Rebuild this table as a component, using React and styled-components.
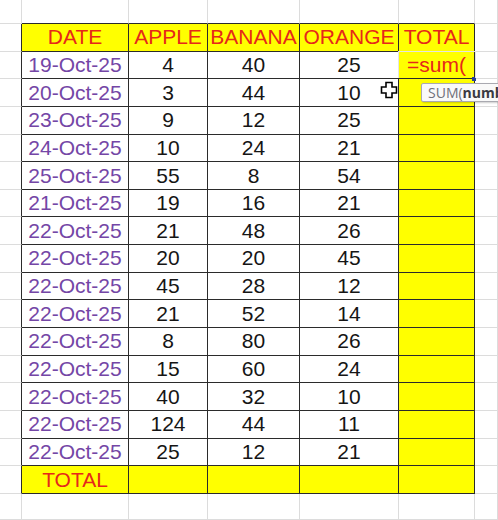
import React from 'react';
import styled, { createGlobalStyle } from 'styled-components';

const GRID = '#dcdcdc';
const DARK = '#2b2b2b';
const YELLOW = '#ffff00';

const GlobalStyle = createGlobalStyle`
  html, body {
    margin: 0;
    padding: 0;
    background: #ffffff;
    overflow: hidden;
  }
`;

const Sheet = styled.div`
  position: relative;
  display: grid;
  grid-template-columns: 22px 107px 79px 92px 99px 76px 1fr;
  grid-template-rows: 24px repeat(17, 27.65px) 1fr;
  width: 100%;
  height: 520px;
  overflow: hidden;
  font-family: 'Liberation Sans', Arial, sans-serif;
  font-size: 21px;
`;

const Cell = styled.div`
  box-sizing: border-box;
  display: flex;
  align-items: center;
  justify-content: center;
  border-right: 1px solid ${p => (p.$edgeR ? DARK : GRID)};
  border-bottom: 1px solid ${p => (p.$edgeB ? DARK : GRID)};
  background: ${p => (p.$fill ? YELLOW : '#ffffff')};
  white-space: nowrap;
`;

const BlankCell = styled(Cell)``;

const HeadCell = styled(Cell)`
  color: #e6281a;
`;

const DateCell = styled(Cell)`
  color: #7446a6;
`;

const NumCell = styled(Cell)`
  color: #151515;
`;

const EditCell = styled(Cell)`
  position: relative;
  justify-content: flex-start;
  padding-left: 8px;
  color: #e6281a;

  &::after {
    content: '';
    position: absolute;
    inset: -1px -2px 0 -1px;
    border: 1px solid #e4e4e4;
    border-bottom: none;
    pointer-events: none;
  }
`;

const FillHandle = styled.span`
  position: absolute;
  right: -2px;
  bottom: -3px;
  width: 4px;
  height: 4px;
  background: #26409a;
`;

const Tooltip = styled.div`
  position: absolute;
  left: 421px;
  top: 83px;
  height: 19px;
  padding: 0 6px;
  display: flex;
  align-items: center;
  box-sizing: border-box;
  background: #f9f9f9;
  border: 1px solid #a9a9b0;
  border-radius: 2px;
  box-shadow: 1px 1px 2px rgba(0, 0, 0, 0.2);
  font-family: 'Open Sans', 'Noto Sans', sans-serif;
  font-size: 14px;
  color: #70707a;
  white-space: nowrap;
`;

const Arg = styled.b`
  color: #3a3a42;
  font-weight: 700;
`;

const Cursor = styled.svg`
  position: absolute;
  left: 380px;
  top: 81px;
`;

const rows = [
  ['19-Oct-25', 4, 40, 25],
  ['20-Oct-25', 3, 44, 10],
  ['23-Oct-25', 9, 12, 25],
  ['24-Oct-25', 10, 24, 21],
  ['25-Oct-25', 55, 8, 54],
  ['21-Oct-25', 19, 16, 21],
  ['22-Oct-25', 21, 48, 26],
  ['22-Oct-25', 20, 20, 45],
  ['22-Oct-25', 45, 28, 12],
  ['22-Oct-25', 21, 52, 14],
  ['22-Oct-25', 8, 80, 26],
  ['22-Oct-25', 15, 60, 24],
  ['22-Oct-25', 40, 32, 10],
  ['22-Oct-25', 124, 44, 11],
  ['22-Oct-25', 25, 12, 21],
];

const headers = ['DATE', 'APPLE', 'BANANA', 'ORANGE', 'TOTAL'];

export default function App() {
  return (
    <>
      <GlobalStyle />
      <Sheet>
        {/* blank row above the table */}
        <BlankCell />
        {headers.map(h => (
          <BlankCell key={h} $edgeB />
        ))}
        <BlankCell />

        {/* header row */}
        <BlankCell $edgeR />
        {headers.map(h => (
          <HeadCell key={h} $fill $edgeR $edgeB>
            {h}
          </HeadCell>
        ))}
        <BlankCell />

        {rows.map(([date, apple, banana, orange], i) => (
          <React.Fragment key={i}>
            <BlankCell $edgeR />
            <DateCell $edgeR $edgeB>{date}</DateCell>
            <NumCell $edgeR $edgeB>{apple}</NumCell>
            <NumCell $edgeR $edgeB>{banana}</NumCell>
            <NumCell $edgeR $edgeB>{orange}</NumCell>
            {i === 0 ? (
              <EditCell $fill $edgeR $edgeB>
                =sum(
                <FillHandle />
              </EditCell>
            ) : (
              <BlankCell $fill $edgeR $edgeB />
            )}
            <BlankCell />
          </React.Fragment>
        ))}

        {/* total row */}
        <BlankCell $edgeR />
        <HeadCell $fill $edgeR $edgeB>TOTAL</HeadCell>
        <BlankCell $fill $edgeR $edgeB />
        <BlankCell $fill $edgeR $edgeB />
        <BlankCell $fill $edgeR $edgeB />
        <BlankCell $fill $edgeR $edgeB />
        <BlankCell />

        {/* blank row below */}
        {[0, 1, 2, 3, 4, 5, 6].map(c => (
          <BlankCell key={c} />
        ))}

        <Tooltip>
          SUM(<Arg>number1</Arg>, [number2], ...)
        </Tooltip>

        <Cursor width="18" height="18" viewBox="0 0 18 18">
          <path
            d="M6 1.5h6v4.5h4.5v6H12v4.5H6V12H1.5V6H6z"
            fill="#ffffff"
            stroke="#000000"
            strokeWidth="1.6"
            strokeLinejoin="miter"
          />
        </Cursor>
      </Sheet>
    </>
  );
}
